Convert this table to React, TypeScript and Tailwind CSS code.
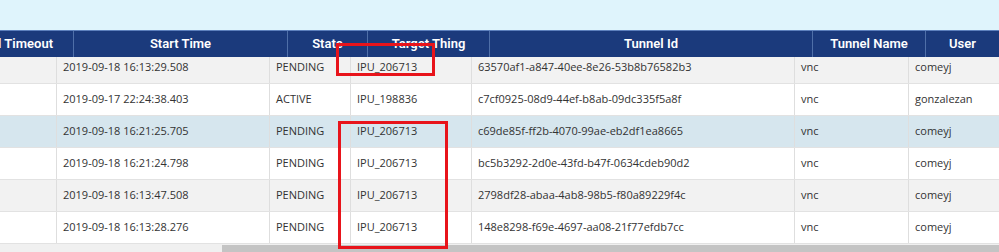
import React from "react";

const rows = [
  { start: "2019-09-18 16:13:29.508", state: "PENDING", target: "IPU_206713", id: "63570af1-a847-40ee-8e26-53b8b76582b3", name: "vnc", user: "comeyj", bg: "bg-[#f2f2f2]" },
  { start: "2019-09-17 22:24:38.403", state: "ACTIVE", target: "IPU_198836", id: "c7cf0925-08d9-44ef-b8ab-09dc335f5a8f", name: "vnc", user: "gonzalezan", bg: "bg-white" },
  { start: "2019-09-18 16:21:25.705", state: "PENDING", target: "IPU_206713", id: "c69de85f-ff2b-4070-99ae-eb2df1ea8665", name: "vnc", user: "comeyj", bg: "bg-[#d6e6ee]" },
  { start: "2019-09-18 16:21:24.798", state: "PENDING", target: "IPU_206713", id: "bc5b3292-2d0e-43fd-b47f-0634cdeb90d2", name: "vnc", user: "comeyj", bg: "bg-white" },
  { start: "2019-09-18 16:13:47.508", state: "PENDING", target: "IPU_206713", id: "2798df28-abaa-4ab8-98b5-f80a89229f4c", name: "vnc", user: "comeyj", bg: "bg-[#f2f2f2]" },
  { start: "2019-09-18 16:13:28.276", state: "PENDING", target: "IPU_206713", id: "148e8298-f69e-4697-aa08-21f77efdb7cc", name: "vnc", user: "comeyj", bg: "bg-white" },
];

const hcell = "flex items-center justify-center border-l border-[#4f6fa8] whitespace-nowrap overflow-hidden shrink-0";
const bcell = "flex items-center pl-[6px] border-l border-[#dedede] whitespace-nowrap overflow-hidden shrink-0";

export default function App() {
  return (
    <div
      className="relative w-[999px] h-[252px] overflow-hidden bg-white flex flex-col"
      style={{ fontFamily: "'Open Sans', 'Noto Sans', sans-serif" }}
    >
      <div className="h-[30px] shrink-0 bg-[#dff4fc]" />
      <div
        className="h-[27px] shrink-0 bg-[#1b3a7c] border-t border-[#5d80bd] flex text-white text-[13px] font-semibold"
        style={{ fontFamily: "Roboto, 'Open Sans', sans-serif" }}
      >
        <div className="w-[73px] shrink-0 flex items-center justify-end pr-[20px] overflow-hidden whitespace-nowrap">
          Control Timeout
        </div>
        <div className={`${hcell} w-[214px]`}>Start Time</div>
        <div className={`${hcell} w-[80px]`}>State</div>
        <div className={`${hcell} w-[122px]`}>Target Thing</div>
        <div className={`${hcell} w-[323px]`}>Tunnel Id</div>
        <div className={`${hcell} w-[113px]`}>Tunnel Name</div>
        <div className={`${hcell} w-[74px]`}>User</div>
      </div>
      <div className="h-[187px] shrink-0 overflow-hidden">
        <div className="mt-[-5px] flex flex-col text-[11px] text-[#333333]">
          {rows.map((r, i) => (
            <div key={i} className={`h-[32px] flex border-b border-[#e2e2e2] ${r.bg}`}>
              <div className="w-[56px] shrink-0" />
              <div className={`${bcell} w-[213px]`}>{r.start}</div>
              <div className={`${bcell} w-[81px]`}>{r.state}</div>
              <div className={`${bcell} w-[121px]`}>{r.target}</div>
              <div className={`${bcell} w-[323px]`}>{r.id}</div>
              <div className={`${bcell} w-[114px]`}>{r.name}</div>
              <div className={`${bcell} flex-1`}>{r.user}</div>
            </div>
          ))}
        </div>
      </div>
      <div className="h-[8px] shrink-0 bg-[#f0f0f0] flex pt-[1px]">
        <div className="ml-[222px] flex-1 bg-[#c4c4c4]" />
      </div>
      <div className="absolute left-[336px] top-[43px] w-[99px] h-[33px] border-[3px] border-[#e8141b]" />
      <div className="absolute left-[338px] top-[121px] w-[110px] h-[128px] border-[3px] border-[#e8141b]" />
    </div>
  );
}
